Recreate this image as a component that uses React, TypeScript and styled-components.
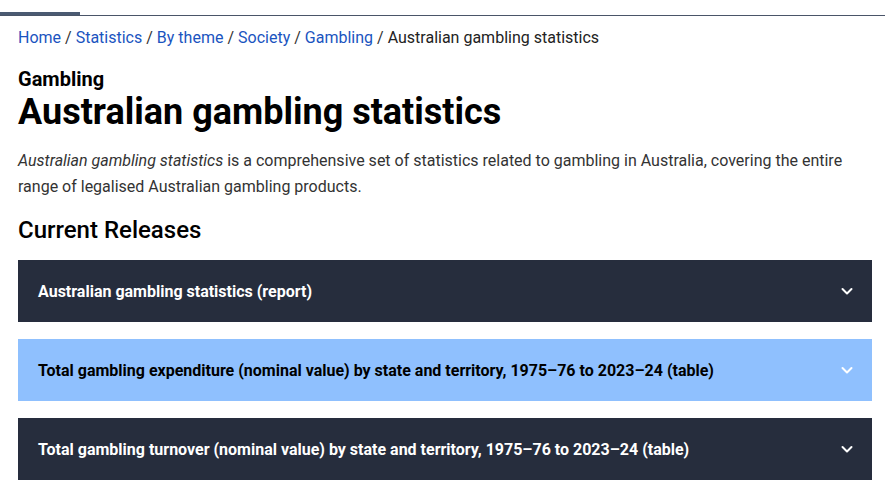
import React from "react";
import styled, { createGlobalStyle } from "styled-components";

const Global = createGlobalStyle`
  html, body { margin: 0; padding: 0; background: #fff; }
  body { font-family: Roboto, "Liberation Sans", Arial, sans-serif; color: #1c1c1c; }
  * { box-sizing: border-box; }
`;

const Page = styled.div`
  width: 885px;
  padding-top: 13px;
`;

const TabBar = styled.div`
  display: flex;
  align-items: flex-end;
  height: 3px;
  border-bottom: 1px solid #4a5568;
`;

const ActiveTab = styled.div`
  width: 80px;
  height: 3px;
  background: #4a5a72;
`;

const Content = styled.main`
  padding: 10px 13px 0 18px;
`;

const Breadcrumbs = styled.nav`
  font-size: 16px;
  line-height: 24px;
  color: #222;
`;

const Crumb = styled.a`
  color: #1a54c0;
  text-decoration: none;
`;

const Sep = styled.span`
  color: #333;
  padding: 0 4px;
`;

const Eyebrow = styled.div`
  margin-top: 16px;
  font-size: 20px;
  font-weight: 700;
  line-height: 26px;
  color: #000;
`;

const Title = styled.h1`
  margin: 0;
  font-size: 36px;
  font-weight: 700;
  line-height: 40px;
  color: #000;
`;

const Lead = styled.p`
  margin: 16px 0 0;
  font-size: 16px;
  line-height: 26px;
  color: #333;
`;

const SectionTitle = styled.h2`
  margin: 14px 0 0;
  font-size: 24px;
  font-weight: 500;
  line-height: 32px;
  color: #000;
`;

const List = styled.div`
  margin-top: 14px;
  display: flex;
  flex-direction: column;
  gap: 17px;
`;

const Item = styled.button<{ $light?: boolean }>`
  display: flex;
  align-items: center;
  justify-content: space-between;
  width: 100%;
  height: 62px;
  padding: 0 18px 0 20px;
  border: none;
  background: ${(p) => (p.$light ? "#8fc0fe" : "#262d3d")};
  color: ${(p) => (p.$light ? "#000" : "#fff")};
  font-family: Roboto, "Liberation Sans", Arial, sans-serif;
  font-size: 16px;
  font-weight: 700;
  text-align: left;
`;

const Chevron = () => (
  <svg width="14" height="14" viewBox="0 0 14 14" fill="none">
    <path d="M2.5 5 L7 9.5 L11.5 5" stroke="#fff" strokeWidth="2" strokeLinecap="round" strokeLinejoin="round" />
  </svg>
);

const items = [
  { label: "Australian gambling statistics (report)", light: false },
  { label: "Total gambling expenditure (nominal value) by state and territory, 1975–76 to 2023–24 (table)", light: true },
  { label: "Total gambling turnover (nominal value) by state and territory, 1975–76 to 2023–24 (table)", light: false },
];

export default function App() {
  return (
    <Page>
      <Global />
      <TabBar>
        <ActiveTab />
      </TabBar>
      <Content>
        <Breadcrumbs>
          <Crumb href="#">Home</Crumb>
          <Sep>/</Sep>
          <Crumb href="#">Statistics</Crumb>
          <Sep>/</Sep>
          <Crumb href="#">By theme</Crumb>
          <Sep>/</Sep>
          <Crumb href="#">Society</Crumb>
          <Sep>/</Sep>
          <Crumb href="#">Gambling</Crumb>
          <Sep>/</Sep>
          <span>Australian gambling statistics</span>
        </Breadcrumbs>
        <Eyebrow>Gambling</Eyebrow>
        <Title>Australian gambling statistics</Title>
        <Lead>
          <em>Australian gambling statistics</em> is a comprehensive set of statistics related to gambling in Australia, covering the entire range of legalised Australian gambling products.
        </Lead>
        <SectionTitle>Current Releases</SectionTitle>
        <List>
          {items.map((it) => (
            <Item key={it.label} $light={it.light}>
              <span>{it.label}</span>
              <Chevron />
            </Item>
          ))}
        </List>
      </Content>
    </Page>
  );
}
